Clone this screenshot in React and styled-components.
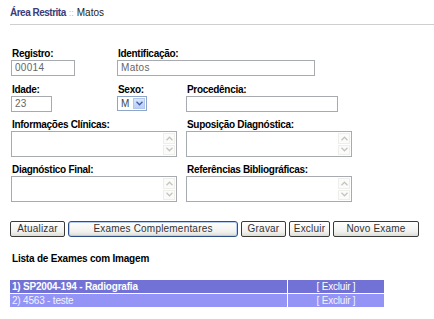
import React from "react";
import styled, { createGlobalStyle } from "styled-components";

const GlobalStyle = createGlobalStyle`
  html, body { margin: 0; padding: 0; background: #fff; }
  body {
    font-family: "Liberation Sans", Arial, sans-serif;
    font-size: 10px;
    color: #000;
  }
`;

const Page = styled.div`
  padding: 7px 0 0 10px;
  width: 424px;
`;

const Breadcrumb = styled.div`
  line-height: 12px;
  padding-bottom: 5px;
  border-bottom: 1px solid #cfcfcf;
  display: flex;
  align-items: baseline;
  gap: 3px;
`;

const Area = styled.span`
  font-size: 10px;
  font-weight: bold;
  letter-spacing: -0.5px;
  color: #3c3c78;
`;

const Sep = styled.span`
  color: #b8b8b8;
  font-size: 9px;
`;

const Current = styled.span`
  color: #222;
  font-size: 10px;
`;

const Form = styled.div`
  margin-top: 23px;
  padding-left: 1px;
  display: flex;
  flex-direction: column;
  gap: 7px;
`;

const Row = styled.div`
  display: flex;
  align-items: flex-start;
  margin-top: ${(p) => p.$mt || 0}px;
`;

const Field = styled.div`
  display: flex;
  flex-direction: column;
  width: ${(p) => (p.$w ? `${p.$w}px` : "auto")};
  flex: none;
`;

const Label = styled.label`
  font-weight: bold;
  font-size: 10px;
  letter-spacing: -0.3px;
  line-height: 12px;
  height: 12px;
  padding-left: 1px;
  color: #000;
  white-space: nowrap;
`;

const Input = styled.div`
  box-sizing: border-box;
  width: ${(p) => p.$w}px;
  height: ${(p) => p.$h || 16}px;
  border: 1px solid #a7abb0;
  background: #fff;
  color: #666;
  font-size: 10px;
  line-height: 14px;
  padding: 0 3px;
  letter-spacing: 0.3px;
`;

const SelectBox = styled.div`
  box-sizing: border-box;
  width: 30px;
  height: 15px;
  border: 1px solid #8ea6c8;
  display: flex;
  align-items: stretch;
  background: #fff;
`;

const SelectValue = styled.span`
  flex: 1;
  color: #444;
  font-size: 10px;
  line-height: 13px;
  padding-left: 3px;
`;

const SelectArrow = styled.span`
  width: 12px;
  margin: 1px;
  background: linear-gradient(#dbe6fc, #b9cdf7);
  border: 1px solid #b3c6ee;
  box-sizing: border-box;
  display: flex;
  align-items: center;
  justify-content: center;
`;

const AreaBox = styled.div`
  box-sizing: border-box;
  width: ${(p) => p.$w}px;
  height: 26px;
  border: 1px solid #a7abb0;
  background: #fff;
  display: flex;
  justify-content: flex-end;
`;

const ScrollBar = styled.div`
  width: 12px;
  display: flex;
  flex-direction: column;
  gap: 1px;
  padding: 1px 1px 1px 0;
`;

const ScrollBtn = styled.div`
  flex: 1;
  border: 1px solid #eeeeea;
  background: #fbfbf9;
  display: flex;
  align-items: center;
  justify-content: center;
`;

const Buttons = styled.div`
  display: flex;
  gap: 3px;
  margin-top: 19px;
`;

const Button = styled.button`
  box-sizing: border-box;
  width: ${(p) => p.$w}px;
  height: 16px;
  padding: 0;
  font-family: "Liberation Sans", Arial, sans-serif;
  font-size: 10px;
  letter-spacing: 0.2px;
  color: #333;
  border: 1px solid ${(p) => (p.$focus ? "#2e4f86" : "#3a3a3a")};
  border-radius: ${(p) => (p.$focus ? 3 : 2)}px;
  background: linear-gradient(#ffffff, #f1f1ee 70%, #dcdcd6);
  box-shadow: ${(p) => (p.$focus ? "inset 0 0 0 1px #b9cdf2" : "none")};
  line-height: 14px;
`;

const ListTitle = styled.div`
  margin-top: 16px;
  font-weight: bold;
  font-size: 10px;
  letter-spacing: -0.2px;
  line-height: 12px;
  padding-left: 2px;
`;

const ExamTable = styled.div`
  margin-top: 15px;
  width: 374px;
  display: grid;
  grid-template-columns: 277px 96px;
  column-gap: 1px;
  row-gap: 1px;
`;

const Cell = styled.div`
  height: 13px;
  line-height: 13px;
  background: ${(p) => (p.$dark ? "#7272d6" : "#9494f6")};
  color: ${(p) => (p.$dark ? "#fff" : "#f2f2ff")};
  font-size: 10px;
  letter-spacing: -0.2px;
  font-weight: ${(p) => (p.$bold ? "bold" : "normal")};
  text-align: ${(p) => (p.$center ? "center" : "left")};
  padding-left: ${(p) => (p.$center ? 0 : 2)}px;
  white-space: nowrap;
`;

const Chevron = ({ up, color = "#c4c4c4", size = 7 }) => (
  <svg width={size} height={size - 2} viewBox="0 0 7 5">
    <path
      d={up ? "M0.5 4.2 L3.5 1.2 L6.5 4.2" : "M0.5 0.8 L3.5 3.8 L6.5 0.8"}
      fill="none"
      stroke={color}
      strokeWidth="1.3"
    />
  </svg>
);

const TextArea = ({ w }) => (
  <AreaBox $w={w}>
    <ScrollBar>
      <ScrollBtn>
        <Chevron up />
      </ScrollBtn>
      <ScrollBtn>
        <Chevron />
      </ScrollBtn>
    </ScrollBar>
  </AreaBox>
);

export default function App() {
  return (
    <>
      <GlobalStyle />
      <Page>
        <Breadcrumb>
          <Area>Área Restrita</Area>
          <Sep>::</Sep>
          <Current>Matos</Current>
        </Breadcrumb>

        <Form>
          <Row>
            <Field $w={106}>
              <Label>Registro:</Label>
              <Input $w={64}>00014</Input>
            </Field>
            <Field>
              <Label>Identificação:</Label>
              <Input $w={198}>Matos</Input>
            </Field>
          </Row>
          <Row $mt={1}>
            <Field $w={106}>
              <Label>Idade:</Label>
              <Input $w={41}>23</Input>
            </Field>
            <Field $w={69}>
              <Label>Sexo:</Label>
              <SelectBox>
                <SelectValue>M</SelectValue>
                <SelectArrow>
                  <Chevron color="#3b5fa8" size={7} />
                </SelectArrow>
              </SelectBox>
            </Field>
            <Field>
              <Label>Procedência:</Label>
              <Input $w={152}></Input>
            </Field>
          </Row>
          <Row>
            <Field $w={175}>
              <Label>Informações Clínicas:</Label>
              <TextArea w={166} />
            </Field>
            <Field>
              <Label>Suposição Diagnóstica:</Label>
              <TextArea w={166} />
            </Field>
          </Row>
          <Row>
            <Field $w={175}>
              <Label>Diagnóstico Final:</Label>
              <TextArea w={166} />
            </Field>
            <Field>
              <Label>Referências Bibliográficas:</Label>
              <TextArea w={166} />
            </Field>
          </Row>
        </Form>

        <Buttons>
          <Button $w={55}>Atualizar</Button>
          <Button $w={170} $focus>
            Exames Complementares
          </Button>
          <Button $w={45}>Gravar</Button>
          <Button $w={41}>Excluir</Button>
          <Button $w={86}>Novo Exame</Button>
        </Buttons>

        <ListTitle>Lista de Exames com Imagem</ListTitle>

        <ExamTable>
          <Cell $dark $bold>1) SP2004-194 - Radiografia</Cell>
          <Cell $dark $center>[ Excluir ]</Cell>
          <Cell>2) 4563 - teste</Cell>
          <Cell $center>[ Excluir ]</Cell>
        </ExamTable>
      </Page>
    </>
  );
}
